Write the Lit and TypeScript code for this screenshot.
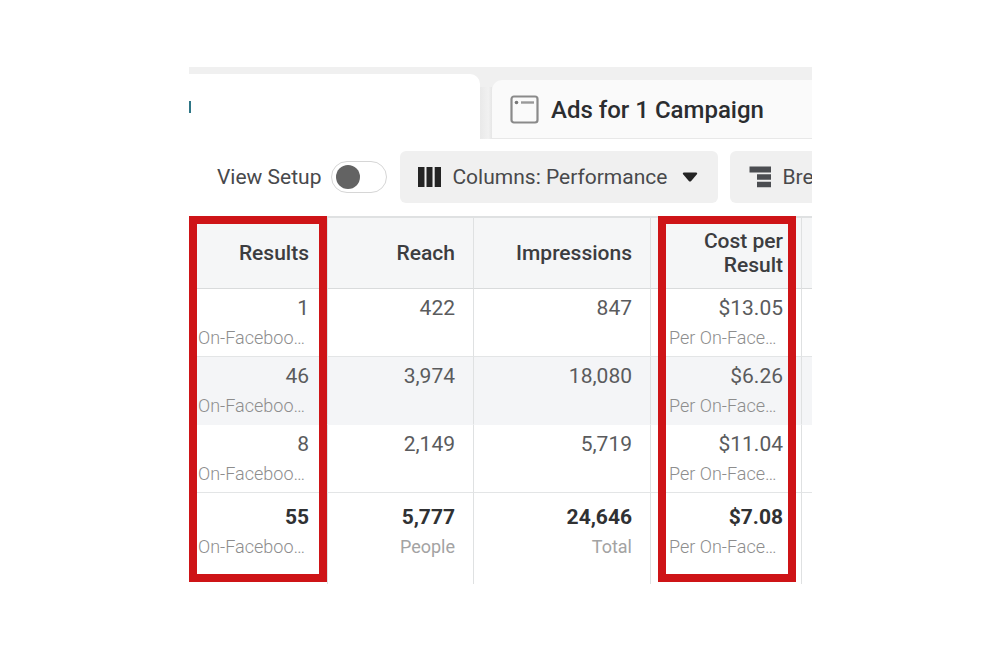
import { LitElement, html, css, nothing } from "lit";
import { customElement } from "lit/decorators.js";
import { classMap } from "lit/directives/class-map.js";

interface Cell {
  value: string;
  note?: string;
  clipped?: boolean;
}

const fb = (value: string): Cell => ({ value, note: "On-Faceboo…", clipped: true });
const per = (value: string): Cell => ({ value, note: "Per On-Face…", clipped: true });

const ROWS: Cell[][] = [
  [fb("1"), { value: "422" }, { value: "847" }, per("$13.05")],
  [fb("46"), { value: "3,974" }, { value: "18,080" }, per("$6.26")],
  [fb("8"), { value: "2,149" }, { value: "5,719" }, per("$11.04")],
];

const TOTALS: Cell[] = [
  fb("55"),
  { value: "5,777", note: "People" },
  { value: "24,646", note: "Total" },
  per("$7.08"),
];

@customElement("ads-tabs")
export class AdsTabs extends LitElement {
  static styles = css`
    :host {
      display: flex;
      height: 72px;
      background: #f0f0f0;
    }
    .tab {
      border: 0;
      padding: 0;
      font: inherit;
      color: #2b2d30;
      text-align: left;
      display: flex;
      align-items: center;
    }
    .active {
      flex: 0 0 291px;
      margin-top: 7px;
      background: #fff;
      border-radius: 0 10px 0 0;
    }
    .mark {
      width: 2px;
      height: 12px;
      background: #2f7686;
    }
    .gap {
      flex: 0 0 12px;
      margin-top: 20px;
      background: linear-gradient(90deg, #e9e9e9, #f1f1f1 70%, #e6e6e6);
    }
    .next {
      flex: 1;
      margin-top: 13px;
      padding: 1px 0 0 18px;
      gap: 12px;
      background: #fafafa;
      border-bottom: 1px solid #e8e8e8;
      border-radius: 10px 0 0 0;
      font-size: 24px;
      font-weight: 500;
      white-space: nowrap;
    }
  `;

  render() {
    return html`
      <button class="tab active" aria-label="Campaigns"><span class="mark"></span></button>
      <span class="gap"></span>
      <button class="tab next">
        <svg width="29" height="29" viewBox="0 0 29 29" fill="none">
          <rect x="1.5" y="1.5" width="26" height="26" rx="2.5" stroke="#8a8a8a" stroke-width="2.2" />
          <circle cx="6.5" cy="7.5" r="1.8" fill="#777" />
          <path d="M11 7.5H24" stroke="#999" stroke-width="2.4" />
        </svg>
        Ads for 1 Campaign
      </button>
    `;
  }
}

@customElement("ads-toolbar")
export class AdsToolbar extends LitElement {
  static styles = css`
    :host {
      display: flex;
      align-items: center;
      padding: 12px 0 13px 28px;
      overflow: hidden;
      color: #48494b;
      font-size: 21px;
      white-space: nowrap;
    }
    .setup {
      display: flex;
      align-items: center;
      gap: 10px;
      margin-right: 13px;
    }
    .switch {
      appearance: none;
      box-sizing: border-box;
      width: 56px;
      height: 32px;
      margin: 0;
      padding: 3px 4px;
      border: 1px solid #d6d6d6;
      border-radius: 16px;
      background: #fff;
    }
    .switch::before {
      content: "";
      display: block;
      width: 24px;
      height: 24px;
      border-radius: 50%;
      background: #636363;
    }
    .btn {
      display: flex;
      align-items: center;
      flex: none;
      height: 52px;
      border: 0;
      border-radius: 6px;
      padding: 0 20px 0 17px;
      margin-right: 12px;
      gap: 10px;
      background: #f0f0f0;
      font: inherit;
      color: inherit;
    }
    .caret {
      margin-left: 5px;
    }
  `;

  render() {
    return html`
      <label class="setup">View Setup <input class="switch" type="checkbox" role="switch" /></label>
      <button class="btn">
        <svg width="25" height="22" viewBox="0 0 25 22" fill="#242424">
          <path d="M1 1h6.5v20H1zM9.5 1h6v20h-6zM17.7 1H24v20h-6.3z" />
        </svg>
        Columns: Performance
        <svg class="caret" width="16" height="12" viewBox="0 0 16 12" fill="#242424">
          <path d="M2 1.5H14Q16 2 14.7 3.6L9.2 10Q8 11 6.8 10L1.3 3.6Q0 2 2 1.5Z" />
        </svg>
      </button>
      <button class="btn">
        <svg width="25" height="24" viewBox="0 0 25 24" fill="#4b4d51">
          <path d="M2.5 1.5H24v6H2.5zM10 9.3h14v5.4H10zM10 16.7h14v5.6H10z" />
        </svg>
        Bre
      </button>
    `;
  }
}

@customElement("ads-table")
export class AdsTable extends LitElement {
  static styles = css`
    :host {
      display: block;
      position: relative;
    }
    .grid {
      width: 100%;
      table-layout: fixed;
      border-collapse: separate;
      border-spacing: 0;
      font-size: 21px;
      line-height: 24px;
      color: #5a5b5d;
    }
    .results { width: 139px; }
    .reach { width: 146px; }
    .cost { width: 151px; }
    .rest { width: 10px; }
    th,
    td {
      box-sizing: border-box;
      padding: 7px 18px 6px 9px;
      border-right: 1px solid #dfe1e2;
      border-bottom: 1px solid #e3e5e6;
      text-align: right;
      vertical-align: top;
      overflow: hidden;
    }
    td {
      height: 68px;
    }
    th:nth-child(4),
    td:nth-child(4) {
      padding-left: 18px;
    }
    th:last-child,
    td:last-child {
      padding: 0;
      border-right: 0;
    }
    th {
      height: 73px;
      padding-top: 0;
      padding-bottom: 0;
      vertical-align: middle;
      background: #f5f6f7;
      border-top: 2px solid #dfe1e2;
      border-bottom-color: #d9dbdc;
      color: #3c3d40;
      font-weight: 500;
    }
    .shade td {
      background: #f4f5f7;
      border-bottom-color: #f4f5f7;
    }
    .totals td {
      height: 91px;
      padding-top: 12px;
      border-bottom: 0;
    }
    .value,
    .note {
      display: block;
      white-space: nowrap;
    }
    .totals .value {
      color: #303133;
      font-weight: 700;
    }
    .note {
      margin-top: 6px;
      font-size: 18px;
      color: #a3a3a3;
    }
    .clipped {
      text-align: left;
      font-weight: 300;
      color: #8d8d8d;
    }
    .frame {
      position: absolute;
      box-sizing: border-box;
      top: 0;
      bottom: 2px;
      width: 138px;
      border: 8px solid #ce1417;
      pointer-events: none;
    }
    .first { left: 0; }
    .second { right: 16px; }
  `;

  private cell(c: Cell) {
    return html`<td>
      <span class="value">${c.value}</span>
      ${c.note
        ? html`<span class=${classMap({ note: true, clipped: !!c.clipped })}>${c.note}</span>`
        : nothing}
    </td>`;
  }

  render() {
    return html`
      <table class="grid">
        <colgroup>
          <col class="results" />
          <col class="reach" />
          <col />
          <col class="cost" />
          <col class="rest" />
        </colgroup>
        <thead>
          <tr>
            <th scope="col">Results</th>
            <th scope="col">Reach</th>
            <th scope="col">Impressions</th>
            <th scope="col">Cost per Result</th>
            <th></th>
          </tr>
        </thead>
        <tbody>
          ${ROWS.map(
            (row, i) => html`<tr class=${classMap({ shade: i % 2 === 1 })}>
              ${row.map((c) => this.cell(c))}
              <td></td>
            </tr>`
          )}
        </tbody>
        <tfoot>
          <tr class="totals">
            ${TOTALS.map((c) => this.cell(c))}
            <td></td>
          </tr>
        </tfoot>
      </table>
      <div class="frame first"></div>
      <div class="frame second"></div>
    `;
  }
}

@customElement("app-root")
export class AppRoot extends LitElement {
  static styles = css`
    :host {
      display: block;
      box-sizing: border-box;
      padding: 67px 188px 66px 189px;
      background: #fff;
      font-family: Roboto, "Liberation Sans", sans-serif;
    }
  `;

  render() {
    return html`
      <ads-tabs></ads-tabs>
      <ads-toolbar></ads-toolbar>
      <ads-table></ads-table>
    `;
  }
}
